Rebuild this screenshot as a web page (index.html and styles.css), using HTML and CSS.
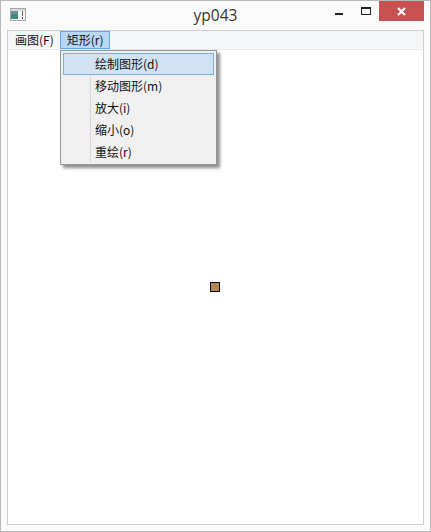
FILE: index.html
```html
<!DOCTYPE html>
<html lang="zh">
<head>
  <meta charset="UTF-8">
  <title>yp043</title>
  <link rel="stylesheet" href="styles.css">
</head>
<body>
  <div class="window">
    <div class="titlebar">
      <svg class="app-icon" width="16" height="14" viewBox="0 0 16 14">
        <rect x="0.5" y="0.5" width="15" height="12" fill="#f4f6f6" stroke="#a3a7aa"/>
        <rect x="1" y="1" width="14" height="2" fill="#d5dadd"/>
        <rect x="1" y="3" width="7" height="8" fill="#3d8a85"/>
        <rect x="1" y="3" width="7" height="3" fill="#6f8f96"/>
        <rect x="12" y="3" width="1" height="5" fill="#5a6670"/>
        <rect x="12" y="9" width="1" height="2" fill="#3c4a55"/>
      </svg>
      <div class="title">yp043</div>
      <div class="controls">
        <div class="btn"><span class="min"></span></div>
        <div class="btn"><span class="max"></span></div>
        <div class="btn close">
          <svg width="9" height="9" viewBox="0 0 9 9">
            <path d="M1 1 L8 8 M8 1 L1 8" stroke="#fff" stroke-width="2.2" fill="none"/>
          </svg>
        </div>
      </div>
    </div>
    <div class="client">
      <div class="menubar">
        <div class="menu-item">画图(F)</div>
        <div class="menu-item open">矩形(r)</div>
      </div>
      <div class="canvas">
        <div class="marker"></div>
      </div>
      <div class="popup">
        <div class="popup-item active">绘制图形(d)</div>
        <div class="popup-item">移动图形(m)</div>
        <div class="popup-item">放大(i)</div>
        <div class="popup-item">缩小(o)</div>
        <div class="popup-item">重绘(r)</div>
      </div>
    </div>
  </div>
</body>
</html>
```

FILE: styles.css
```css
html, body { margin: 0; padding: 0; }
body { font-family: "Noto Sans CJK SC", "Open Sans", sans-serif; font-size: 12px; color: #111; }

.window { width: 431px; height: 532px; box-sizing: border-box; background: #fbfbfb; border: 1px solid #b9b9b9; padding: 0 6px 6px; display: flex; flex-direction: column; }

.titlebar { height: 29px; flex: none; position: relative; display: flex; align-items: center; }
.app-icon { margin: 0 0 1px 3px; }
.title { position: absolute; left: 0; right: 0; top: 3px; text-align: center; font-family: "Open Sans", sans-serif; font-size: 15.5px; line-height: 22px; color: #333; }
.controls { position: absolute; right: 0; top: 0; display: flex; }
.btn { width: 26px; height: 20px; display: flex; align-items: center; justify-content: center; }
.btn.close { width: 45px; background: #c75050; }
.min { width: 8px; height: 2px; background: #222; margin: 6px 2px 0 0; }
.max { width: 8px; height: 5px; border: 1px solid #222; border-top-width: 2px; }

.client { flex: 1; border: 1px solid #cfcfcf; position: relative; display: flex; flex-direction: column; background: #fff; }

.menubar { height: 18px; flex: none; background: #f5f6f7; border-bottom: 1px solid #e8e9ea; display: flex; }
.menu-item { padding: 0 5px 0 6px; height: 18px; box-sizing: border-box; border: 1px solid transparent; line-height: 16px; }
.menu-item.open { background: #b8d6f5; border-color: #66a7e8; }

.canvas { flex: 1; position: relative; }
.marker { position: absolute; left: 202px; top: 232px; width: 8px; height: 8px; background: #b08555; border: 1px solid #111; }

.popup { position: absolute; left: 52px; top: 19px; width: 151px; height: 110px; background: #f0f0f0; border: 1px solid #979797; padding: 2px 2px 1px; box-shadow: 3px 3px 3px rgba(0,0,0,0.45); }
.popup::before { content: ""; position: absolute; left: 29px; top: 2px; bottom: 2px; width: 1px; background: #d7d7d7; }
.popup-item { height: 22px; line-height: 20px; box-sizing: border-box; border: 1px solid transparent; padding-left: 31px; position: relative; }
.popup-item.active { background: #d1e2f2; border-color: #78aee5; }
```
